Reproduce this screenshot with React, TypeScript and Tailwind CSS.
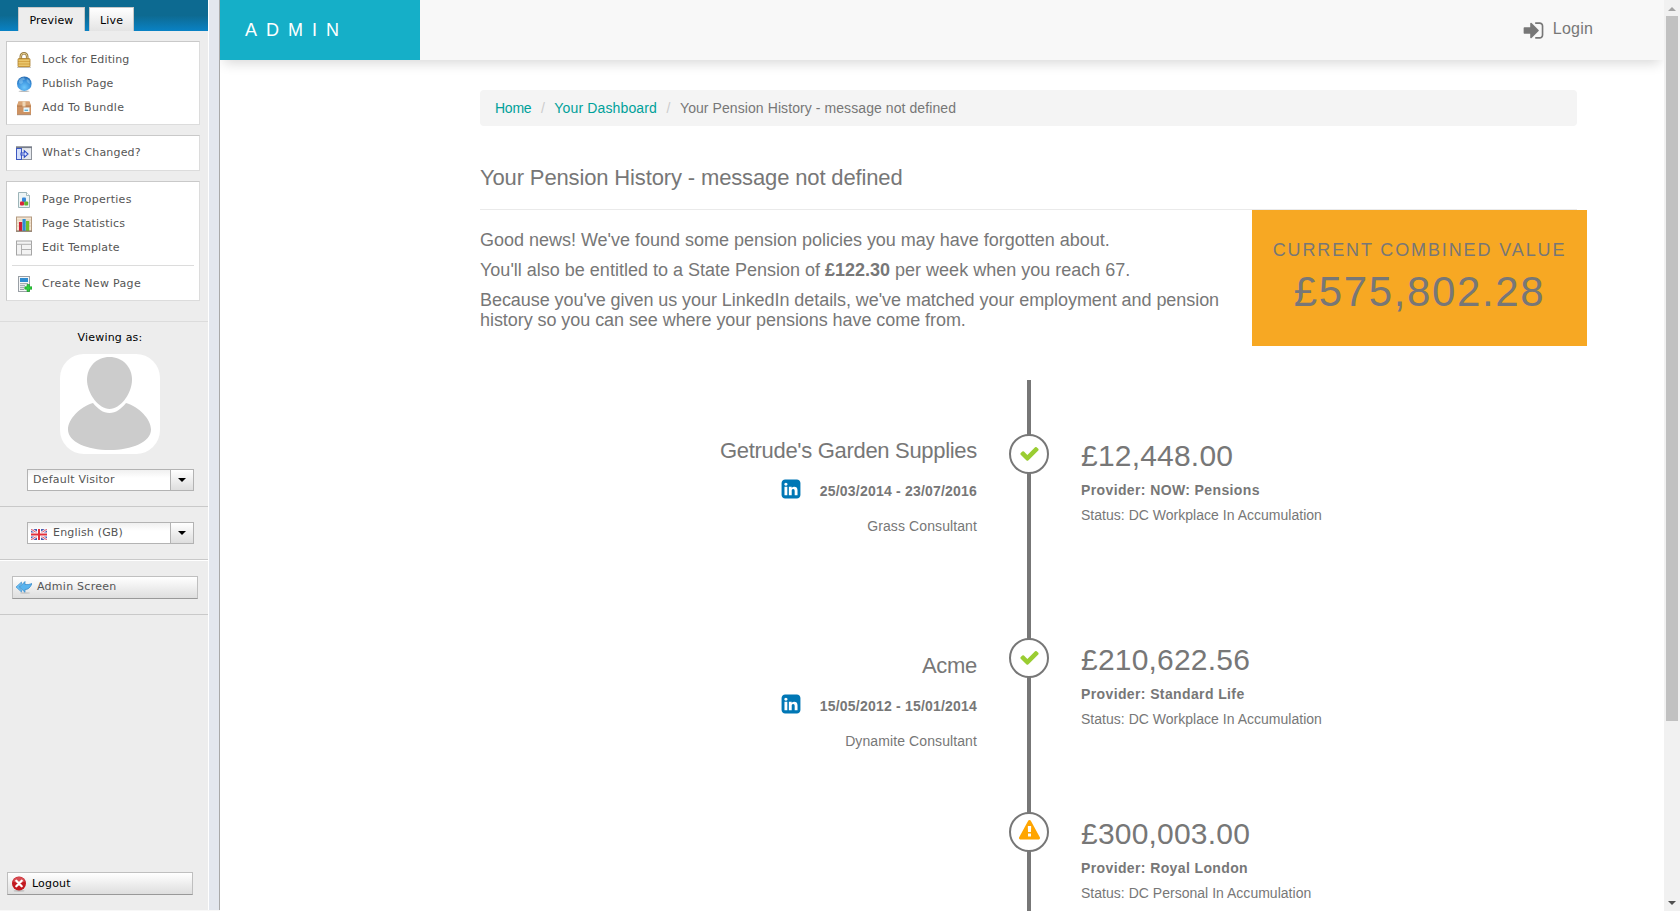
import type { ReactNode } from "react";

const FA_CHECK =
  "M1671 566q0 40-28 68l-724 724-136 136q-28 28-68 28t-68-28l-136-136-362-362q-28-28-28-68t28-68l136-136q28-28 68-28t68 28l294 295 656-657q28-28 68-28t68 28l136 136q28 28 28 68z";
const FA_WARNING =
  "M1024 1375v-190q0-14-9.500-23.500t-22.500-9.500h-192q-13 0-22.500 9.500t-9.500 23.500v190q0 14 9.500 23.500t22.500 9.500h192q13 0 22.500-9.500t9.500-23.500zm-2-374l18-459q0-12-10-19-13-11-24-11h-220q-11 0-24 11-10 7-10 21l17 457q0 10 10 16.500t24 6.500h185q14 0 23.500-6.500t10.500-16.500zm-14-934l768 1408q35 63-2 126-17 29-46.500 46t-63.500 17h-1536q-34 0-63.500-17t-46.500-46q-37-63-2-126l768-1408q17-31 47-49t65-18 65 18 47 49z";
const FA_LINKEDIN =
  "M365 1414h231v-694h-231v694zm246-908q-1-52-36-86t-93-34-94.500 34-36.500 86q0 51 35.500 85.500t92.500 34.500h1q59 0 95-34.500t36-85.500zm585 908h231v-398q0-154-73-233t-193-79q-136 0-209 117h2v-101h-231q3 66 0 694h231v-388q0-38 7-56 15-35 45-59.500t74-24.500q116 0 116 157v371zm468-998v960q0 119-84.500 203.500t-203.500 84.500h-960q-119 0-203.500-84.500t-84.500-203.500v-960q0-119 84.500-203.500t203.500-84.500h960q119 0 203.500 84.500t84.500 203.500z";
const FA_SIGN_IN =
  "M1312 896q0 26-19 45l-544 544q-19 19-45 19t-45-19-19-45v-288h-448q-26 0-45-19t-19-45v-384q0-26 19-45t45-19h448v-288q0-26 19-45t45-19 45 19l544 544q19 19 19 45zm352-352v704q0 119-84.500 203.500t-203.500 84.500h-320q-13 0-22.500-9.500t-9.500-22.500q0-4-1-20t-.5-26.500 3-23.500 10-19.500 20.500-6.500h320q66 0 113-47t47-113v-704q0-66-47-113t-113-47h-312l-11.500-1-11.500-3-8-5.500-7-9-2-13.500q0-4-1-20t-.5-26.500 3-23.500 10-19.500 20.500-6.500h320q119 0 203.500 84.500t84.500 203.500z";

function Fa({ d, className }: { d: string; className: string }) {
  return (
    <svg viewBox="0 0 1792 1792" className={className} fill="currentColor">
      <path d={d} />
    </svg>
  );
}

function Icon16({ children }: { children: ReactNode }) {
  return (
    <svg viewBox="0 0 16 16" className="block h-4 w-4 shrink-0">
      {children}
    </svg>
  );
}

const LockIcon = () => (
  <Icon16>
    <path d="M4.800 7V4.500a3.200 3.200 0 0 1 6.400 0V7" fill="none" stroke="#94783f" strokeWidth="2.600" />
    <path d="M4.800 7V4.500a3.200 3.200 0 0 1 6.400 0V7" fill="none" stroke="#e6cf8e" strokeWidth="1" />
    <rect x="2" y="6.500" width="12" height="8.500" rx="1" fill="#d6a545" stroke="#a87e2e" strokeWidth=".8" />
    <path d="M2.500 8.200h11M2.500 10.800h11M2.500 13.200h11" stroke="#f3d67f" strokeWidth="1" />
    <path d="M1 15.500h14" stroke="#bbb" strokeWidth=".8" />
  </Icon16>
);

const GlobeIcon = () => (
  <Icon16>
    <defs>
      <radialGradient id="globe" cx=".5" cy=".75" r=".75">
        <stop offset="0" stopColor="#6cc6fb" />
        <stop offset=".6" stopColor="#3b93de" />
        <stop offset="1" stopColor="#2467ad" />
      </radialGradient>
    </defs>
    <ellipse cx="8" cy="15.200" rx="5.500" ry=".8" fill="#bbb" />
    <circle cx="8.300" cy="7.700" r="7.300" fill="url(#globe)" />
    <path d="M3 4q2-3 5-2.500l1 2-2.500 1 .5 2-2 1.500L3 7zM11 3l2.500 1.500L14 8l-2-1-1.500-2z" fill="#a9dcfb" opacity=".4" />
  </Icon16>
);

const BundleIcon = () => (
  <Icon16>
    <path d="M2.500 1.500h11L15 6v8.500H1V6z" fill="#cd9262" />
    <path d="M2.500 1.500h11L15 6H1z" fill="#d9a474" />
    <path d="M1 6h14" stroke="#a86f43" strokeWidth=".8" />
    <path d="M6.500 1.500h3V6.500h-3z" fill="#efd6b5" />
    <rect x="7.500" y="7.500" width="6" height="4.500" fill="#eaf6fb" />
    <path d="M8.500 10.300h3.500" stroke="#5fb4d8" strokeWidth="1.400" />
    <path d="M1 14.700h14" stroke="#8e6646" strokeWidth=".7" />
  </Icon16>
);

const ChangedIcon = () => (
  <Icon16>
    <rect x=".5" y="2" width="15" height="12.500" fill="#e6e9ee" stroke="#8f949c" />
    <path d="M0 2.300h16" stroke="#777d88" strokeWidth="1.600" />
    <rect x=".5" y="3.500" width="5" height="11" fill="#d5e0fb" stroke="#3c57c0" />
    <path d="M5 8h3.300V5.700L12 9l-3.700 3.300V10H5z" fill="#dfe8ff" stroke="#2c4bc4" strokeWidth="1.100" />
  </Icon16>
);

const PropertiesIcon = () => (
  <Icon16>
    <path d="M2.500.5h8l3 3v12h-11z" fill="#edf4f5" stroke="#93acb0" strokeWidth=".9" />
    <path d="M10.500.5v3h3" fill="#fff" stroke="#93acb0" strokeWidth=".8" />
    <rect x="6" y="5.500" width="4" height="4.500" rx="1" fill="#3687d8" />
    <rect x="4" y="9.500" width="4" height="4" rx="1" fill="#d9263b" />
    <rect x="8.200" y="9.500" width="4" height="4" rx="1" fill="#62b52e" />
  </Icon16>
);

const StatisticsIcon = () => (
  <Icon16>
    <rect x=".5" y="1" width="15" height="14" fill="#f4e6d4" stroke="#b49a80" />
    <path d="M1 4h14M1 7h14M1 10h14" stroke="#dcc6ac" strokeWidth=".8" />
    <rect x="3" y="6" width="3.200" height="9" fill="#cf1f35" />
    <rect x="6.500" y="3" width="3.200" height="12" fill="#2e8fd2" />
    <rect x="10" y="5" width="3.200" height="10" fill="#74bf2a" />
    <path d="M0 15.200h16" stroke="#7d6c5e" />
  </Icon16>
);

const TemplateIcon = () => (
  <Icon16>
    <rect x=".5" y="1" width="15" height="14" fill="#f3f3f3" stroke="#a5a5a5" />
    <path d="M0 4.300h16M5.500 4.500V15M5.500 9.500h10" stroke="#b0b0b0" fill="none" />
  </Icon16>
);

const NewPageIcon = () => (
  <Icon16>
    <rect x="2.500" y=".5" width="11" height="15" fill="#f6f7f8" stroke="#999fa5" />
    <rect x="4" y="2" width="8" height="4" fill="#2f8cd0" />
    <path d="M4 7.700h8M4 9.700h5M4 11.700h4M4 13.500h4" stroke="#8a929a" strokeWidth=".9" />
    <path d="M11 8.500h2.500v2.300H16v2.400h-2.500v2.300H11v-2.300H8.800v-2.400H11z" fill="#2fcf3c" stroke="#159324" strokeWidth=".6" />
  </Icon16>
);

const FlagIcon = () => (
  <svg viewBox="0 0 16 11" className="block h-[11px] w-4 shrink-0">
    <rect width="16" height="11" fill="#4a5bb0" />
    <path d="M0 0l16 11M16 0L0 11" stroke="#f2e9f0" strokeWidth="2.600" />
    <path d="M0 0l16 11M16 0L0 11" stroke="#e0586a" strokeWidth="1" />
    <path d="M8 0v11M0 5.500h16" stroke="#fff" strokeWidth="4" />
    <path d="M8 0v11M0 5.500h16" stroke="#e2303c" strokeWidth="2" />
  </svg>
);

const BackIcon = () => (
  <Icon16>
    <ellipse cx="9" cy="14" rx="5" ry="1" fill="#ccc" />
    <path d="M9 2.500L3.500 8 9 13.300V10.500q4.500.2 7-6-3 1.500-7 1z" fill="#5ab4ee" stroke="#2f85c8" strokeWidth=".7" />
    <path d="M5.500 3L0 8l5.500 5V11L3 8l2.500-3z" fill="#6cc0f4" stroke="#2f85c8" strokeWidth=".6" />
  </Icon16>
);

const CloseIcon = () => (
  <Icon16>
    <ellipse cx="8" cy="14.800" rx="5.500" ry=".9" fill="#bbb" />
    <circle cx="8" cy="7.500" r="7" fill="#c31920" />
    <path d="M2 5.500a6.300 6.300 0 0 1 12 0q-6 2.500-12 0z" fill="#e0636a" opacity=".7" />
    <path d="M5.300 4.800l5.400 5.400M10.700 4.800l-5.400 5.400" stroke="#fff" strokeWidth="2.300" strokeLinecap="round" />
  </Icon16>
);

function MenuItem({ icon, className = "", children }: { icon: ReactNode; className?: string; children: ReactNode }) {
  return (
    <div className="flex h-6 items-center gap-[10px] pl-[9px]">
      {icon}
      <span className={className}>{children}</span>
    </div>
  );
}

function MenuBox({ className, children }: { className: string; children: ReactNode }) {
  return (
    <div className={`ml-[6px] w-[194px] shrink-0 border border-[#dcdcdc] border-t-[#c9c9c9] border-l-[#c9c9c9] bg-white ${className}`}>
      {children}
    </div>
  );
}

function Select({ children }: { children: ReactNode }) {
  return (
    <div className="ml-[27px] flex h-[22px] w-[167px] border border-[#b3b3b3] bg-white">
      <div className="flex flex-1 items-center bg-linear-to-b from-[#f0f0f0] to-white to-40%">{children}</div>
      <div className="flex w-[23px] items-center justify-center border-l border-[#b3b3b3] bg-linear-to-b from-white to-[#dedede]">
        <svg viewBox="0 0 8 4" className="h-1 w-2">
          <path d="M0 0h8L4 4z" fill="#000" />
        </svg>
      </div>
    </div>
  );
}

function Sidebar() {
  return (
    <aside className="flex h-[910px] w-[208px] shrink-0 flex-col bg-[#ededed] font-['DejaVu_Sans',Verdana,sans-serif] text-[11px] leading-[14px] tracking-[0.18px] text-[#555]">
      <div className="flex h-[31px] shrink-0 items-end gap-1 bg-linear-to-b from-[#0d6a91] from-50% to-[#0982c5] pl-[18px] text-black">
        <div className="flex h-6 w-[67px] items-center justify-center border border-b-0 border-[#c8c8c8] bg-[#ededed] pt-[2px]">Preview</div>
        <div className="flex h-6 w-[45px] items-center justify-center border border-b-0 border-[#c8c8c8] bg-linear-to-b from-white to-[#e4e4e4] pt-[2px]">Live</div>
      </div>
      <MenuBox className="mt-[10px] h-[84px] pt-[6px]">
        <MenuItem icon={<LockIcon />} className="tracking-[0.12px]">Lock for Editing</MenuItem>
        <MenuItem icon={<GlobeIcon />}>Publish Page</MenuItem>
        <MenuItem icon={<BundleIcon />} className="tracking-[0.32px]">Add To Bundle</MenuItem>
      </MenuBox>
      <MenuBox className="mt-[10px] h-9 pt-[5px]">
        <MenuItem icon={<ChangedIcon />}>What's Changed?</MenuItem>
      </MenuBox>
      <MenuBox className="mt-[10px] h-[120px] pt-[6px]">
        <MenuItem icon={<PropertiesIcon />} className="tracking-[0.26px]">Page Properties</MenuItem>
        <MenuItem icon={<StatisticsIcon />}>Page Statistics</MenuItem>
        <MenuItem icon={<TemplateIcon />} className="tracking-[0.22px]">Edit Template</MenuItem>
        <div className="mx-[5px] mt-[5px] mb-[6px] border-t border-[#dcdcdc]" />
        <MenuItem icon={<NewPageIcon />} className="tracking-[0.32px]">Create New Page</MenuItem>
      </MenuBox>
      <div className="mt-[20px] h-px shrink-0 bg-[#dcdcdc]" />
      <div className="mt-[9px] ml-[12px] text-center text-black">Viewing as:</div>
      <svg viewBox="0 0 100 100" className="mt-[9px] ml-[60px] block h-[100px] w-[100px] shrink-0">
        <rect width="100" height="100" rx="24" fill="#fff" />
        <path d="M49.500 3c13 0 22.500 10 22.500 22.500C72 40 60 55 49.500 55S27 40 27 25.500C27 13 36.500 3 49.500 3z" fill="#ccc" />
        <path d="M33 49c-13 4-25 16-25 26.500C8 88 27 96 49.500 96S91 88 91 75.500C91 65 79 53 66 49c-5 6-10 10-16.500 10S38 55 33 49z" fill="#ccc" />
      </svg>
      <div className="mt-[15px]">
        <Select>
          <span className="pl-[5px] tracking-[0.22px]">Default Visitor</span>
        </Select>
      </div>
      <div className="mt-[15px] h-px shrink-0 bg-[#c9c9c9]" />
      <div className="mt-[15px]">
        <Select>
          <span className="flex items-center gap-[6px] pl-[3px]">
            <span className="pt-[2px]">
              <FlagIcon />
            </span>
            English (GB)
          </span>
        </Select>
      </div>
      <div className="mt-[15px] h-[2px] shrink-0 border-t border-[#c9c9c9] bg-white" />
      <div className="mt-[15px] ml-3 flex h-[23px] w-[186px] shrink-0 items-center gap-[5px] border border-[#bfbfbf] border-b-[#999] bg-linear-to-b from-white to-[#dedede] pb-px pl-[3px]">
        <BackIcon />
        <span className="tracking-[0.26px]">Admin Screen</span>
      </div>
      <div className="mt-[15px] h-px shrink-0 bg-[#c9c9c9]" />
      <div className="mt-auto mb-[15px] ml-[7px] flex h-[23px] w-[186px] shrink-0 items-center gap-[5px] border border-[#bfbfbf] border-b-[#999] bg-linear-to-b from-white to-[#dedede] pl-[3px] text-black">
        <CloseIcon />
        Logout
      </div>
    </aside>
  );
}

function Marker({ warning = false }: { warning?: boolean }) {
  return (
    <div className="relative ml-[32px] flex h-10 w-10 items-center justify-center rounded-full border-2 border-[#777] bg-white">
      {warning ? (
        <Fa d={FA_WARNING} className="mb-[3px] h-[21px] w-[21px] text-[#ffa500]" />
      ) : (
        <Fa d={FA_CHECK} className="mb-px h-[21px] w-[21px] text-[#9acd32]" />
      )}
    </div>
  );
}

function Employer({ name, dates, role, className }: { name: string; dates: string; role: string; className: string }) {
  return (
    <div className={`flex flex-col items-end ${className}`}>
      <div className="text-[22px] leading-6 tracking-[-0.31px]">{name}</div>
      <div className="mt-[15px] flex h-[25px] items-start">
        <Fa d={FA_LINKEDIN} className="mr-[18px] h-[22px] w-[22px] text-[#0077b5]" />
        <span className="pt-[3px] text-[14px] leading-5 font-bold tracking-[0.2px]">{dates}</span>
      </div>
      <div className="mt-[13px] text-[14px] leading-5 tracking-[0.1px]">{role}</div>
    </div>
  );
}

function Policy({ value, provider, status }: { value: string; provider: string; status: string }) {
  return (
    <div className="pt-[5px] pl-[32px]">
      <div className="text-[30px] leading-[33px] tracking-[0.2px]">{value}</div>
      <div className="mt-[8px] text-[14px] leading-5 font-bold tracking-[0.38px]">Provider: {provider}</div>
      <div className="mt-[5px] text-[14px] leading-5 tracking-[0.02px]">Status: {status}</div>
    </div>
  );
}

function Content() {
  return (
    <main className="flex min-w-0 flex-1 flex-col overflow-hidden bg-white font-['Liberation_Sans',Arial,sans-serif] text-[#777]">
      <header className="flex h-[60px] shrink-0 items-stretch bg-[#f8f8f8] shadow-[0_7px_12px_-4px_rgba(0,0,0,0.16)]">
        <div className="flex w-[200px] items-center bg-[#15afc8] pl-[25px] text-[18px] tracking-[9px] text-white">ADMIN</div>
        <div className="ml-auto flex items-center pr-[71px]">
          <Fa d={FA_SIGN_IN} className="mr-[8px] h-[23px] w-[23px]" />
          <span className="pb-[3px] text-[16px] tracking-[0.2px]">Login</span>
        </div>
      </header>

      <nav className="mt-[30px] ml-[260px] flex h-9 w-[1097px] shrink-0 items-center rounded bg-[#f4f4f4] pl-[15px] text-[14px]">
        <span className="tracking-[-0.25px] text-[#00a19a]">Home</span>
        <span className="w-[23px] text-center text-[#ccc]">/</span>
        <span className="tracking-[0.14px] text-[#00a19a]">Your Dashboard</span>
        <span className="w-[23px] text-center text-[#ccc]">/</span>
        <span className="tracking-[0.08px]">Your Pension History - message not defined</span>
      </nav>

      <h1 className="mt-[40px] ml-[260px] text-[22px] leading-6 tracking-[-0.14px]">Your Pension History - message not defined</h1>
      <div className="mt-[19px] ml-[260px] h-px w-[1097px] shrink-0 bg-[#eaeaea]" />

      <div className="ml-[260px] flex h-[170px] shrink-0 items-start">
        <div className="w-[772px] pt-5 pr-[20px] text-[18px] leading-5">
          <p className="tracking-[-0.01px]">Good news! We've found some pension policies you may have forgotten about.</p>
          <p className="mt-[10px]">
            You'll also be entitled to a State Pension of <b>£122.30</b> per week when you reach 67.
          </p>
          <p className="mt-[10px] tracking-[-0.06px]">
            Because you've given us your LinkedIn details, we've matched your employment and pension history so you can see where your pensions have come from.
          </p>
        </div>
        <div className="h-[136px] w-[335px] bg-[#f7a823] pt-[30px] text-center">
          <div className="text-[18px] leading-5 tracking-[1.88px]">CURRENT COMBINED VALUE</div>
          <div className="mt-[9px] text-[42px] leading-[46px] tracking-[1.65px]">£575,802.28</div>
        </div>
      </div>

      <section className="relative flex-1 pt-[54px]">
        <div className="absolute top-0 bottom-0 left-[807px] w-1 bg-[#777]" />
        <div className="grid h-[204px] grid-cols-[757px_72px_1fr]">
          <Employer className="pt-[5px]" name="Getrude's Garden Supplies" dates="25/03/2014 - 23/07/2016" role="Grass Consultant" />
          <Marker />
          <Policy value="£12,448.00" provider="NOW: Pensions" status="DC Workplace In Accumulation" />
        </div>
        <div className="grid h-[174px] grid-cols-[757px_72px_1fr]">
          <Employer className="pt-[16px]" name="Acme" dates="15/05/2012 - 15/01/2014" role="Dynamite Consultant" />
          <Marker />
          <Policy value="£210,622.56" provider="Standard Life" status="DC Workplace In Accumulation" />
        </div>
        <div className="grid grid-cols-[757px_72px_1fr]">
          <div />
          <Marker warning />
          <Policy value="£300,003.00" provider="Royal London" status="DC Personal In Accumulation" />
        </div>
      </section>
    </main>
  );
}

function Scrollbar() {
  return (
    <div className="flex w-4 shrink-0 flex-col items-center bg-[#f1f1f1]">
      <div className="flex h-4 items-center">
        <svg viewBox="0 0 8 4" className="mt-[2px] h-1 w-2">
          <path d="M0 4h8L4 0z" fill="#a3a3a3" />
        </svg>
      </div>
      <div className="h-[705px] w-3 bg-[#c1c1c1]" />
      <div className="mt-auto flex h-4 items-center">
        <svg viewBox="0 0 8 4" className="h-1 w-2">
          <path d="M0 0h8L4 4z" fill="#505050" />
        </svg>
      </div>
    </div>
  );
}

export default function App() {
  return (
    <div className="flex h-[911px] w-[1680px] overflow-hidden bg-[#f8f8f8]">
      <Sidebar />
      <div className="flex h-[910px] w-3 shrink-0 border-r border-l border-r-[#a9a9a9] border-l-white bg-[#e3e7ee]" />
      <Content />
      <Scrollbar />
    </div>
  );
}
